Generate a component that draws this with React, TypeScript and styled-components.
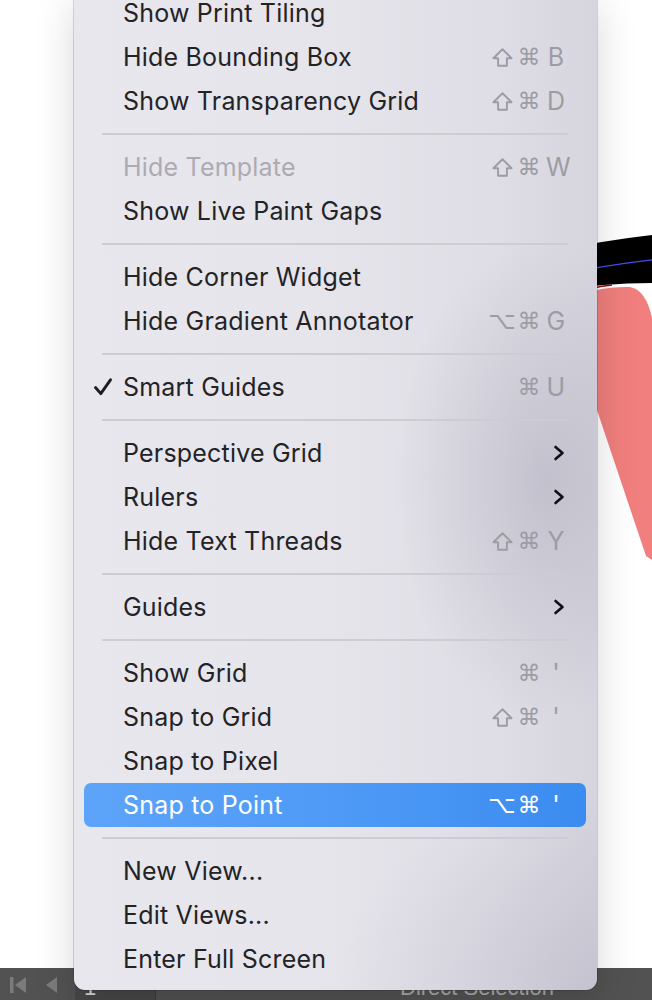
import React from "react";
import styled, { createGlobalStyle, css } from "styled-components";

const GlobalStyle = createGlobalStyle`
  html, body {
    margin: 0;
    padding: 0;
    background: #ffffff;
  }
  body {
    width: 652px;
    height: 1000px;
    overflow: hidden;
    font-family: Inter, "Noto Sans", "DejaVu Sans", sans-serif;
  }
`;

const Page = styled.div`
  position: relative;
  width: 652px;
  height: 1000px;
  display: flex;
  flex-direction: column;
  overflow: hidden;
`;

const Canvas = styled.div`
  flex: 1;
  background: #ffffff;
  position: relative;
  overflow: hidden;
`;

const Artwork = styled.svg`
  display: block;
  width: 100%;
  height: 100%;
`;

const StatusBar = styled.div`
  height: 32px;
  background: #525252;
  display: flex;
  align-items: center;
  padding-left: 10px;
  color: #b4b4b4;
  font-family: "Liberation Sans", Arial, sans-serif;
`;

const NavIcon = styled.svg<{ $ml?: number }>`
  display: block;
  flex: none;
  margin-left: ${(p) => p.$ml ?? 0}px;
  margin-top: 2px;
`;

const PageField = styled.div`
  width: 80px;
  height: 32px;
  margin-left: 18px;
  background: #474747;
  display: flex;
  align-items: flex-end;
  padding-left: 9px;
  box-sizing: border-box;
  font-size: 22px;
  line-height: 24px;
  color: #d6d6d6;
`;

const BarDivider = styled.div`
  width: 1px;
  height: 32px;
  background: #3c3c3c;
`;

const ToolName = styled.div`
  margin-left: 244px;
  font-size: 22px;
  align-self: flex-end;
  line-height: 24px;
  color: #aaaaaa;
  white-space: nowrap;
`;

const Menu = styled.div`
  position: absolute;
  left: 74px;
  top: -9px;
  width: 523px;
  box-sizing: border-box;
  padding: 0 0 9px;
  border-radius: 0 0 11px 11px;
  background:
    radial-gradient(ellipse 150px 240px at 470px 490px, rgba(150, 150, 168, 0.36), rgba(150, 150, 168, 0) 100%),
    radial-gradient(ellipse 260px 200px at 523px 1000px, rgba(160, 160, 178, 0.35), rgba(160, 160, 178, 0) 100%),
    linear-gradient(90deg, #e8e7ee 0%, #e6e5ec 45%, #dfdee6 80%, #d6d5de 100%);
  box-shadow:
    0 0 0 1px rgba(0, 0, 0, 0.14),
    0 14px 40px rgba(0, 0, 0, 0.16);
  font-family: Inter, "Noto Sans", sans-serif;
`;

const Item = styled.div<{ $active?: boolean; $disabled?: boolean }>`
  height: 44px;
  margin: 0 11px 0 10px;
  padding-right: 20px;
  border-radius: 7px;
  display: grid;
  grid-template-columns: 39px 1fr auto;
  align-items: center;
  font-size: 25px;
  letter-spacing: 0.2px;
  color: ${(p) => (p.$disabled ? "#acabb2" : "#232326")};
  ${(p) =>
    p.$active &&
    css`
      background: linear-gradient(90deg, #5da4f9 0%, #4e9af6 50%, #3b8cf0 100%);
      color: #ffffff;
    `}
`;

const CheckCell = styled.div`
  display: flex;
  align-items: center;
  padding-left: 9px;
`;

const Label = styled.span`
  white-space: nowrap;
`;

const Shortcut = styled.div<{ $active?: boolean }>`
  display: flex;
  align-items: center;
  color: ${(p) => (p.$active ? "#ffffff" : "#9d9ca3")};
`;

const Modifiers = styled.div`
  display: flex;
  justify-content: flex-end;
  align-items: center;
  gap: 5px;
  width: 48px;
`;

const ModKey = styled.span<{ $size: number }>`
  width: 22px;
  height: 24px;
  display: flex;
  align-items: center;
  justify-content: center;
  font-family: "DejaVu Sans", sans-serif;
  font-size: ${(p) => p.$size}px;
  line-height: 24px;
`;

const KeyChar = styled.span`
  width: 20px;
  margin-left: 6px;
  text-align: center;
  font-size: 25px;
`;

const Chevron = styled.svg`
  display: block;
  margin-right: 1px;
`;

const Separator = styled.div`
  height: 22px;
  display: flex;
  align-items: center;
  padding: 0 29px 0 28px;
  &::after {
    content: "";
    flex: 1;
    height: 2px;
    background: #cdccd3;
  }
`;

type Entry =
  | { kind: "sep" }
  | {
      kind: "item";
      label: string;
      mods?: string[];
      key?: string;
      disabled?: boolean;
      checked?: boolean;
      submenu?: boolean;
      active?: boolean;
    };

const SHIFT = "\u21E7";
const CMD = "\u2318";
const OPT = "\u2325";

const modSize: Record<string, number> = {
  [SHIFT]: 24,
  [CMD]: 23,
  [OPT]: 24,
};

const entries: Entry[] = [
  { kind: "item", label: "Show Print Tiling" },
  { kind: "item", label: "Hide Bounding Box", mods: [SHIFT, CMD], key: "B" },
  { kind: "item", label: "Show Transparency Grid", mods: [SHIFT, CMD], key: "D" },
  { kind: "sep" },
  { kind: "item", label: "Hide Template", mods: [SHIFT, CMD], key: "W", disabled: true },
  { kind: "item", label: "Show Live Paint Gaps" },
  { kind: "sep" },
  { kind: "item", label: "Hide Corner Widget" },
  { kind: "item", label: "Hide Gradient Annotator", mods: [OPT, CMD], key: "G" },
  { kind: "sep" },
  { kind: "item", label: "Smart Guides", mods: [CMD], key: "U", checked: true },
  { kind: "sep" },
  { kind: "item", label: "Perspective Grid", submenu: true },
  { kind: "item", label: "Rulers", submenu: true },
  { kind: "item", label: "Hide Text Threads", mods: [SHIFT, CMD], key: "Y" },
  { kind: "sep" },
  { kind: "item", label: "Guides", submenu: true },
  { kind: "sep" },
  { kind: "item", label: "Show Grid", mods: [CMD], key: "'" },
  { kind: "item", label: "Snap to Grid", mods: [SHIFT, CMD], key: "'" },
  { kind: "item", label: "Snap to Pixel" },
  { kind: "item", label: "Snap to Point", mods: [OPT, CMD], key: "'", active: true },
  { kind: "sep" },
  { kind: "item", label: "New View..." },
  { kind: "item", label: "Edit Views..." },
  { kind: "item", label: "Enter Full Screen" },
];

function ShiftIcon() {
  return (
    <svg width="21" height="19" viewBox="0 0 21 19" aria-label={SHIFT}>
      <path
        d="M10.5 1.3 L19.6 10.2 L14.9 10.2 L14.9 17.8 L6.1 17.8 L6.1 10.2 L1.4 10.2 Z"
        fill="none"
        stroke="currentColor"
        strokeWidth="1.9"
        strokeLinejoin="round"
      />
    </svg>
  );
}

function CheckMark() {
  return (
    <svg width="20" height="20" viewBox="0 0 20 20">
      <path
        d="M2.5 10.5 L7.8 16.6 L17.5 2.8"
        fill="none"
        stroke="#1e1e20"
        strokeWidth="2.9"
        strokeLinecap="round"
        strokeLinejoin="round"
      />
    </svg>
  );
}

function SubmenuArrow() {
  return (
    <Chevron width="12" height="16" viewBox="0 0 12 16">
      <path
        d="M2.5 2 L9.5 8 L2.5 14"
        fill="none"
        stroke="#111111"
        strokeWidth="2.6"
        strokeLinecap="round"
        strokeLinejoin="round"
      />
    </Chevron>
  );
}

function MenuRow({ e }: { e: Extract<Entry, { kind: "item" }> }) {
  return (
    <Item $active={e.active} $disabled={e.disabled}>
      <CheckCell>{e.checked ? <CheckMark /> : null}</CheckCell>
      <Label>{e.label}</Label>
      {e.submenu ? (
        <SubmenuArrow />
      ) : e.key ? (
        <Shortcut $active={e.active}>
          <Modifiers>
            {(e.mods || []).map((m, i) => (
              <ModKey key={i} $size={modSize[m]}>
                {m === SHIFT ? <ShiftIcon /> : m}
              </ModKey>
            ))}
          </Modifiers>
          <KeyChar>{e.key}</KeyChar>
        </Shortcut>
      ) : (
        <span />
      )}
    </Item>
  );
}

export default function App() {
  return (
    <>
      <GlobalStyle />
      <Page>
        <Canvas>
          <Artwork viewBox="0 0 652 968" preserveAspectRatio="none">
            <path
              d="M560 300 Q 600 286 630 287 Q 646 290 652 318 L 652 560 L 646 556 Z"
              fill="#f07f7d"
            />
            <path d="M560 250 Q 605 240 660 234 L 660 283 Q 605 283 560 290 Z" fill="#000000" />
            <path d="M560 275 Q 610 264 660 259" fill="none" stroke="#4b4bf0" strokeWidth="1.4" />
            <path d="M590 289 Q 600 286 612 285" fill="none" stroke="#8a1010" strokeWidth="1.5" />
          </Artwork>
        </Canvas>
        <StatusBar>
          <NavIcon width="18" height="16" viewBox="0 0 18 16">
            <rect x="0" y="0" width="3.5" height="16" fill="#7b7b7b" />
            <path d="M16 0 L16 16 L5 8 Z" fill="#7b7b7b" />
          </NavIcon>
          <NavIcon width="11" height="16" viewBox="0 0 11 16" $ml={18}>
            <path d="M11 0 L11 16 L0 8 Z" fill="#7b7b7b" />
          </NavIcon>
          <PageField>1</PageField>
          <BarDivider />
          <ToolName>Direct Selection</ToolName>
        </StatusBar>
        <Menu>
          {entries.map((e, i) =>
            e.kind === "sep" ? <Separator key={i} /> : <MenuRow key={i} e={e} />
          )}
        </Menu>
      </Page>
    </>
  );
}
